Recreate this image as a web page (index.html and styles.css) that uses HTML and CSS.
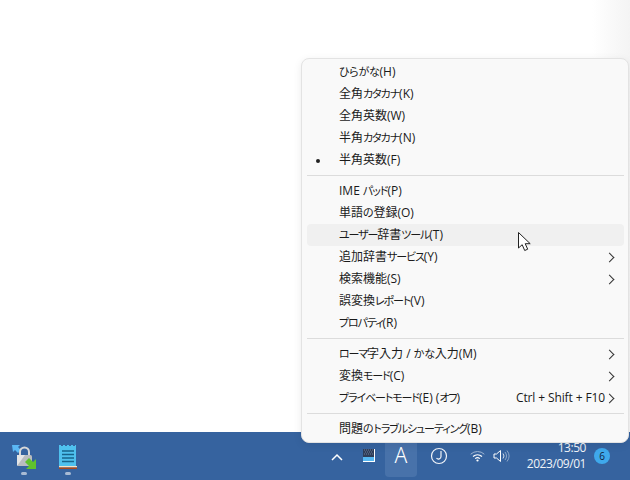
FILE: index.html
```html
<!DOCTYPE html>
<html lang="ja">
<head>
<meta charset="utf-8">
<title>IME menu</title>
<link rel="stylesheet" href="styles.css">
</head>
<body>
<main class="desktop"></main>
<footer class="taskbar">
  <div class="apps">
    <button class="app">
      <svg width="26" height="26" viewBox="0 0 26 26">
        <path d="M1 1h8l-2 2 3 3-3 3-3-3-2 2z" fill="#5bb8f5"/>
        <path d="M9 12V8a4.500 4.500 0 0 1 9 0v4" fill="none" stroke="#d8d8d8" stroke-width="2"/>
        <rect x="6" y="11" width="15" height="11" rx="1.500" fill="#b9bcbf"/>
        <path d="M6 22V11h8z" fill="#e4e5e6"/>
        <path d="M25 25h-10l3-3-4-4 4-4 4 4 3-3z" fill="#5fc22c"/>
      </svg>
      <span class="dot"></span>
    </button>
    <button class="app">
      <svg width="20" height="26" viewBox="0 0 20 26">
        <path d="M1 1h2v1h2V1h2v1h2V1h2v1h2V1h2v1h2V1h1v22H1z" fill="#4fc1ee"/>
        <path d="M4 7h12M4 10.500h12M4 14h12M4 17.500h12" stroke="#17648c" stroke-width="1.500"/>
        <rect x="1" y="22" width="18" height="1.500" fill="#f3e2c8"/>
        <rect x="1" y="23.500" width="18" height="1.500" fill="#a8481c"/>
      </svg>
      <span class="dot"></span>
    </button>
  </div>
  <div class="tray">
    <svg class="chev" width="12" height="8" viewBox="0 0 12 8"><path d="M1 7l5-5 5 5" fill="none" stroke="#fff" stroke-width="1.500"/></svg>
    <svg class="status" width="12" height="13" viewBox="0 0 12 13">
      <rect width="11" height="8" fill="#2f3d58"/>
      <path d="M1 1h1M3 1h1M5 1h1M7 1h1M9 1h1M2 3h1M4 3h1M6 3h1M8 3h1M1 5h1M3 5h1M5 5h1M7 5h1M9 5h1" stroke="#6f7f9c" stroke-width="1"/>
      <rect y="8" width="11" height="4" fill="#56b7f1"/>
      <path d="M0 12.500h12M11.500 0v13" stroke="#fff" stroke-width="1"/>
    </svg>
    <span class="ime">A</span>
    <svg class="clock" width="18" height="18" viewBox="0 0 18 18"><circle cx="9" cy="9" r="7.500" fill="none" stroke="#f2f5f9" stroke-width="1.200"/><path d="M11 4v5.500a2.500 2.500 0 0 1-4.500 1.500" fill="none" stroke="#f2f5f9" stroke-width="1.200"/></svg>
    <svg class="wifi" width="15" height="12" viewBox="0 0 15 12"><path d="M.7 4.200a10 10 0 0 1 13.600 0" fill="none" stroke="#9fb5d2" stroke-width="1"/><path d="M3 6.500a7 7 0 0 1 9 0M5.200 8.600a3.600 3.600 0 0 1 4.600 0" fill="none" stroke="#fff" stroke-width="1.200"/><circle cx="7.500" cy="10.500" r="1.100" fill="#fff"/></svg>
    <svg class="vol" width="17" height="14" viewBox="0 0 17 14"><path d="M1 5h2.500L7.500 1.500v11L3.500 9H1z" fill="none" stroke="#fff"/><path d="M10 4.500a4 4 0 0 1 0 5" fill="none" stroke="#d5dfec"/><path d="M12 3a6.500 6.500 0 0 1 0 8M14 1.500a9 9 0 0 1 0 11" fill="none" stroke="#8ea7c8"/></svg>
    <div class="time"><span>13:50</span><span>2023/09/01</span></div>
    <span class="badge">6</span>
  </div>
</footer>
<nav class="menu">
  <ul class="group">
    <li class="item"><span><span class="hira">ひらがな</span>(H)</span></li>
    <li class="item"><span>全角<span class="kata">カタカナ</span>(K)</span></li>
    <li class="item"><span>全角英数(W)</span></li>
    <li class="item"><span>半角<span class="kata">カタカナ</span>(N)</span></li>
    <li class="item checked"><span>半角英数(F)</span></li>
  </ul>
  <ul class="group">
    <li class="item"><span>IME <span class="kata">パッド</span>(P)</span></li>
    <li class="item"><span>単語<span class="hira">の</span>登録(O)</span></li>
    <li class="item hover"><span><span class="kata">ユーザー</span>辞書<span class="kata">ツール</span>(T)</span></li>
    <li class="item sub"><span>追加辞書<span class="kata">サービス</span>(Y)</span></li>
    <li class="item sub"><span>検索機能(S)</span></li>
    <li class="item"><span>誤変換<span class="kata">レポート</span>(V)</span></li>
    <li class="item"><span><span class="kata">プロパティ</span>(R)</span></li>
  </ul>
  <ul class="group">
    <li class="item sub"><span><span class="kata">ローマ</span>字入力 / <span class="hira">かな</span>入力(M)</span></li>
    <li class="item sub"><span>変換<span class="kata">モード</span>(C)</span></li>
    <li class="item sub"><span><span class="kata">プライベートモード</span>(E) (<span class="kata">オフ</span>)</span><span class="key">Ctrl + Shift + F10</span></li>
  </ul>
  <ul class="group">
    <li class="item"><span>問題<span class="hira">の</span><span class="kata">トラブルシューティング</span>(B)</span></li>
  </ul>
</nav>
<svg class="cursor" width="13" height="20" viewBox="0 0 13 20"><path d="M.5.500v15.500l3.700-3.300 2.500 5.800 3-1.300-2.500-5.500h5z" fill="#fff" stroke="#222" stroke-width="1"/></svg>
</body>
</html>
```
FILE: styles.css
```css
* { box-sizing: border-box; }
html, body { margin: 0; height: 100%; }
body {
  width: 630px;
  height: 480px;
  overflow: hidden;
  position: relative;
  display: flex;
  flex-direction: column;
  background: #fff;
  font-family: "Open Sans", "Noto Sans CJK JP", sans-serif;
}
.desktop {
  flex: 1;
  background: linear-gradient(to right, #fff 94%, #f4f4f4);
}
.taskbar {
  height: 48px;
  background: #36639f;
  display: flex;
  justify-content: space-between;
  align-items: center;
  color: #fff;
}
.apps { display: flex; padding-left: 2px; }
.app {
  width: 44px;
  height: 48px;
  padding: 12px 0 0;
  border: 0;
  background: none;
  display: flex;
  flex-direction: column;
  align-items: center;
  gap: 2px;
}
.dot { width: 6px; height: 3px; border-radius: 2px; background: #a9bbd4; }
.tray { display: flex; align-items: center; height: 48px; }
.chev { margin-right: 20px; margin-top: 1px; }
.status { margin-right: 10px; margin-top: -1px; }
.ime {
  width: 32px;
  height: 45px;
  margin-top: -3px;
  border-radius: 0 0 4px 4px;
  background: #4872aa;
  display: flex;
  align-items: center;
  justify-content: center;
  padding-top: 1px;
  font-size: 21px;
  font-family: "Noto Sans", sans-serif;
  font-weight: 300;
}
.clock { margin-left: 13px; margin-top: -1px; }
.wifi { margin-left: 22px; }
.vol { margin-left: 8px; margin-top: -1px; }
.time {
  display: flex;
  flex-direction: column;
  align-items: flex-end;
  width: 68px;
  margin-left: 8px;
  font-size: 12px;
  line-height: 16px;
  letter-spacing: -.45px;
  color: #f0f3f8;
}
.badge {
  width: 16px;
  height: 16px;
  margin: 0 20px 0 8px;
  border-radius: 50%;
  background: #3fa9ec;
  color: #10243d;
  font-size: 10px;
  line-height: 16px;
  text-align: center;
}
.menu {
  position: absolute;
  left: 301px;
  top: 58px;
  width: 328px;
  height: 385px;
  padding: 2px 4px 0 5px;
  background: #f9f9f9;
  border: 1px solid #e3e3e3;
  border-radius: 8px;
  box-shadow: 0 2px 8px rgba(0, 0, 0, .08);
  color: #1a1a1a;
  font-size: 12px;
  font-feature-settings: "palt";
}
.group {
  list-style: none;
  margin: 0 0 4px;
  padding: 0 0 4px;
  border-bottom: 1px solid #dcdcdc;
}
.group:last-child { border-bottom: 0; margin: 0; padding: 0; }
.item {
  position: relative;
  display: flex;
  justify-content: space-between;
  align-items: center;
  height: 22px;
  padding: 0 19px 2px 32px;
  white-space: nowrap;
}
.kata { font-size: 11px; letter-spacing: -1.1px; }
.hira { font-size: 11px; letter-spacing: -.25px; }
.hover { background: #f0f0f0; border-radius: 4px; }
.checked::before {
  content: "";
  position: absolute;
  left: 9px;
  top: 10px;
  width: 4px;
  height: 4px;
  border-radius: 50%;
  background: #222;
}
.sub::after {
  content: "";
  position: absolute;
  right: 11px;
  top: 8px;
  width: 6px;
  height: 6px;
  border-top: 1.2px solid #333;
  border-right: 1.2px solid #333;
  transform: rotate(45deg);
}
.key { letter-spacing: -.12px; }
.cursor { position: absolute; left: 518px; top: 232px; }
```
